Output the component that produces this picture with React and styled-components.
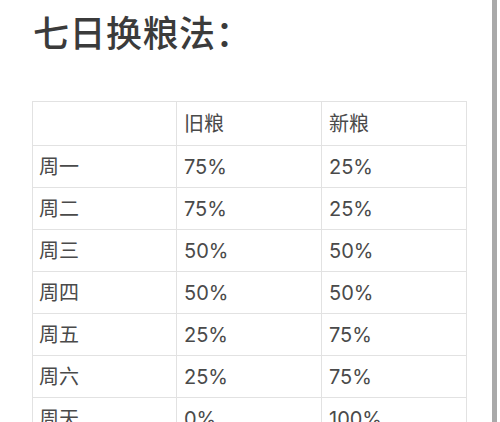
import React from "react";
import styled, { createGlobalStyle } from "styled-components";

const Global = createGlobalStyle`
  html, body { margin: 0; padding: 0; background: #fff; }
  body { font-family: "Inter", "Noto Sans CJK SC", "Noto Sans", sans-serif; }
`;

const Page = styled.div`
  display: flex;
  width: 500px;
  height: 422px;
  overflow: hidden;
  background: #fff;
`;

const Main = styled.main`
  flex: 0 0 492px;
  padding: 5px 0 0 32px;
  box-sizing: border-box;
`;

const EdgeBar = styled.div`
  flex: 0 0 5px;
  background: #a9a9a9;
`;

const Title = styled.h1`
  margin: 0 0 0 1px;
  font-family: "Noto Sans CJK SC", sans-serif;
  font-size: 36px;
  line-height: 52px;
  font-weight: 500;
  color: #3b3b3b;
  letter-spacing: 0.5px;
`;

const Table = styled.table`
  margin-top: 44px;
  width: 435px;
  border-collapse: collapse;
  table-layout: fixed;
  color: #4a4a4a;
  font-size: 20px;
`;

const Cell = styled.td`
  border: 1px solid #e2e2e2;
  height: ${(p) => (p.$head ? 44 : 42)}px;
  padding: 0 0 0 ${(p) => (p.$first ? 6 : 7)}px;
  box-sizing: border-box;
  line-height: 1;
  vertical-align: middle;
  text-align: left;
  font-weight: 400;
`;

const rows = [
  ["周一", "75%", "25%"],
  ["周二", "75%", "25%"],
  ["周三", "50%", "50%"],
  ["周四", "50%", "50%"],
  ["周五", "25%", "75%"],
  ["周六", "25%", "75%"],
  ["周天", "0%", "100%"],
];

export default function App() {
  return (
    <>
      <Global />
      <Page>
        <Main>
          <Title>七日换粮法：</Title>
          <Table>
            <colgroup>
              <col style={{ width: 144 }} />
              <col style={{ width: 145 }} />
              <col style={{ width: 145 }} />
            </colgroup>
            <thead>
              <tr>
                <Cell as="th" $head $first></Cell>
                <Cell as="th" $head>旧粮</Cell>
                <Cell as="th" $head>新粮</Cell>
              </tr>
            </thead>
            <tbody>
              {rows.map((r) => (
                <tr key={r[0]}>
                  <Cell $first>{r[0]}</Cell>
                  <Cell>{r[1]}</Cell>
                  <Cell>{r[2]}</Cell>
                </tr>
              ))}
            </tbody>
          </Table>
        </Main>
        <EdgeBar />
      </Page>
    </>
  );
}
